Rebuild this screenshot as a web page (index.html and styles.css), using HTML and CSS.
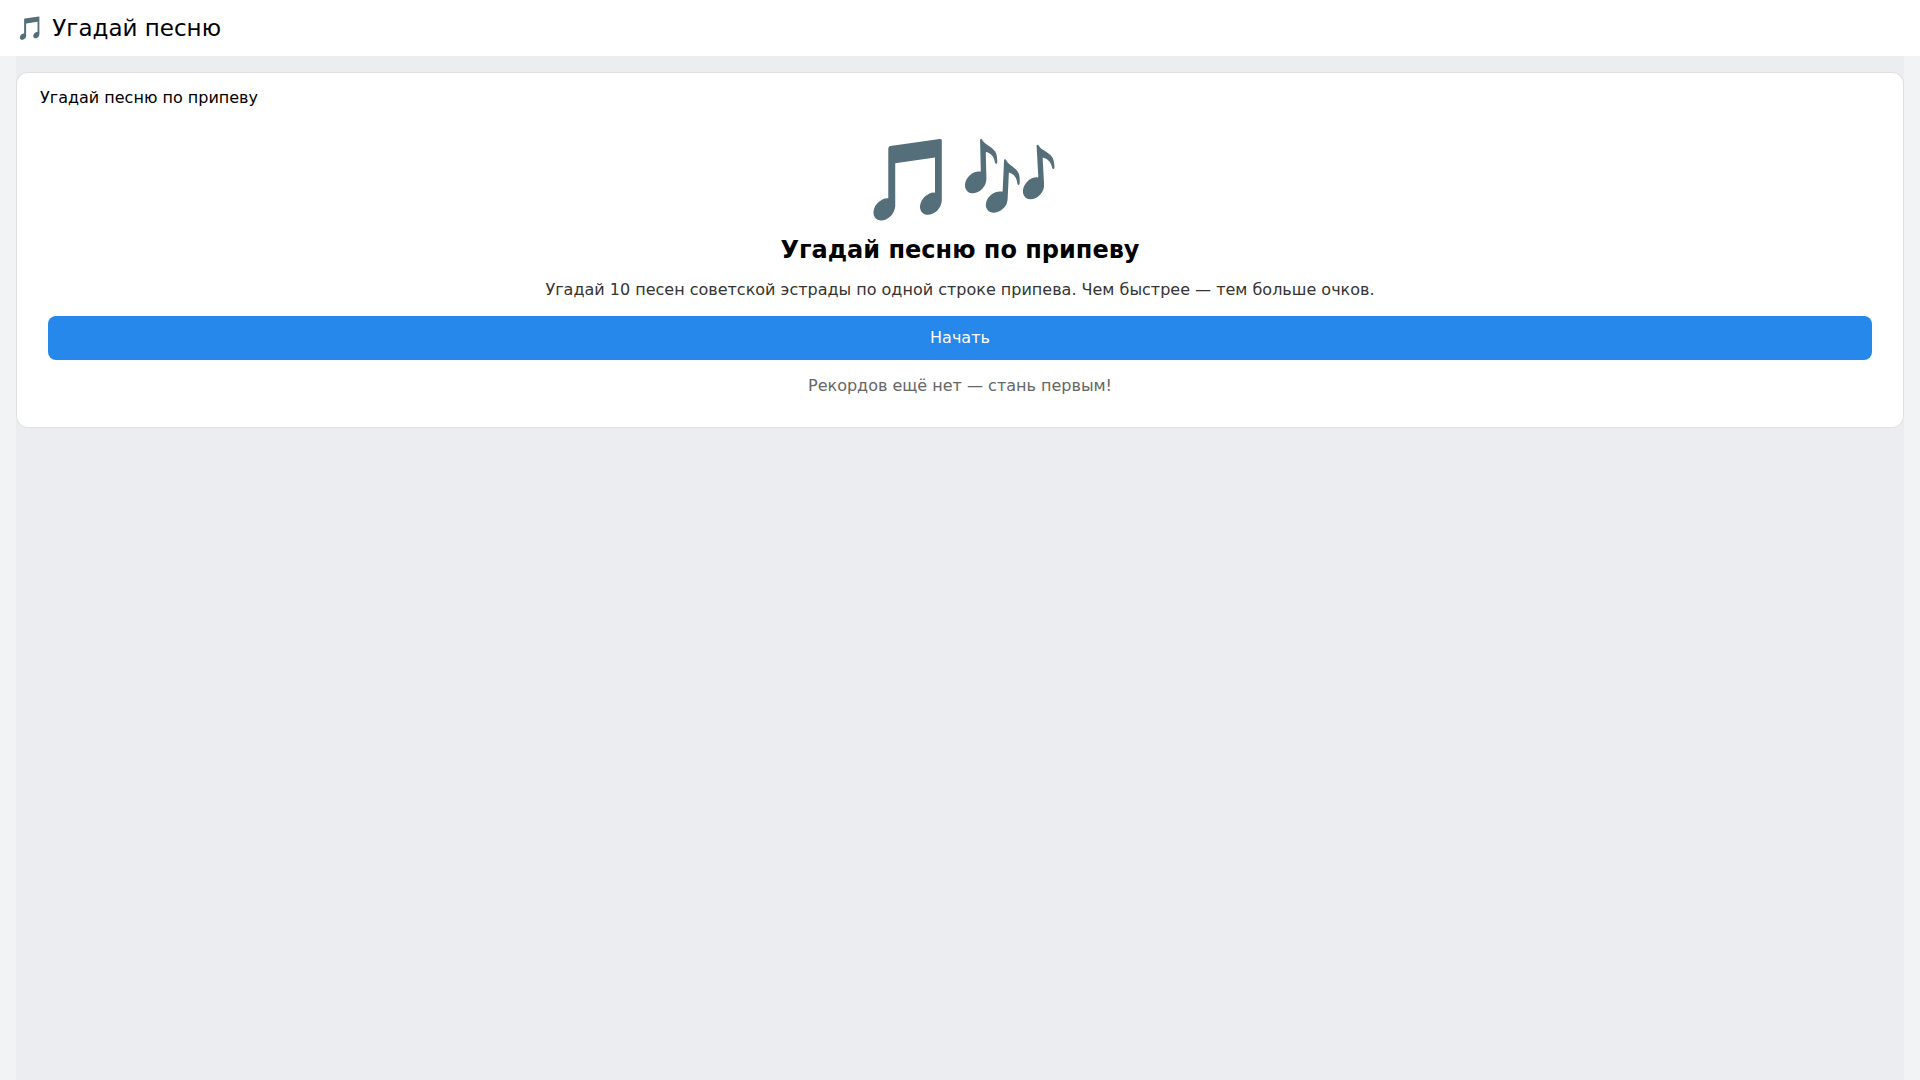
FILE: index.html
```html
<!DOCTYPE html>
<html lang="ru">
<head>
<meta charset="utf-8">
<title>Угадай песню</title>
<link rel="stylesheet" href="styles.css">
</head>
<body>
<header class="header"><h1 class="brand">🎵 Угадай песню</h1></header>
<main class="content">
<section class="card">
<div class="card-title">Угадай песню по припеву</div>
<div class="intro">
<div class="notes">🎵🎶</div>
<h2 class="title">Угадай песню по припеву</h2>
<p class="lead">Угадай 10 песен советской эстрады по одной строке припева. Чем быстрее — тем больше очков.</p>
<button class="start" type="button">Начать</button>
<p class="records">Рекордов ещё нет — стань первым!</p>
</div>
</section>
</main>
</body>
</html>
```
FILE: styles.css
```css
* { box-sizing: border-box; }
body {
  margin: 0;
  min-height: 100vh;
  display: flex;
  flex-direction: column;
  background: #f2f3f5;
  color: #000;
  font: 16px/20px "DejaVu Sans", sans-serif;
}
h1, h2, p { margin: 0; }
.header { padding: 12px 16px; background: #fff; }
.brand { font-size: 23px; line-height: 32px; font-weight: 400; }
.content { flex: 1; margin: 0 16px; padding-top: 16px; background: #ebedf0; }
.card { padding-top: 16px; background: #fff; box-shadow: inset 0 0 0 1px rgba(0, 0, 0, 0.12); border-radius: 12px; }
.card-title { padding: 0 24px; }
.intro { display: flex; flex-direction: column; gap: 16px; padding: 32px; text-align: center; }
.notes { font-size: 80px; line-height: 80px; }
.title { font-size: 24px; line-height: 28px; }
.lead { color: #333; }
.start { height: 44px; border: 0; border-radius: 8px; background: #2688eb; color: #fff; font: inherit; }
.records { color: #666; }
```
